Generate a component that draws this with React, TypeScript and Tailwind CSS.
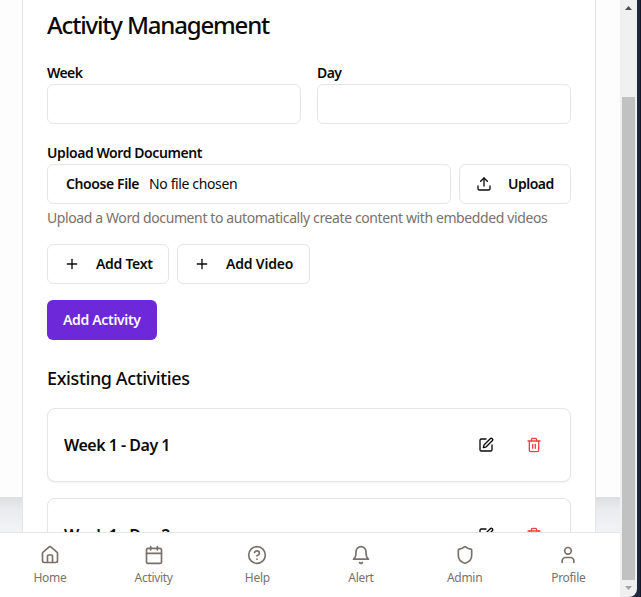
import type { ReactNode } from "react";
import { Calendar, CircleHelp, House, Plus, Shield, SquarePen, Trash2, Upload, User } from "lucide-react";

const field = "h-10 rounded-md border border-[#e5e5e5] bg-white";
const outline = "flex h-10 items-center rounded-md border border-[#e5e5e5] bg-white pl-4 text-sm font-semibold whitespace-nowrap";

function ActivityRow({ title }: { title: string }) {
  return (
    <div className="flex h-[74px] shrink-0 items-center justify-between rounded-lg border border-[#e5e5e5] bg-white pl-4 pr-7 shadow-xs">
      <span className="text-base font-semibold tracking-[-0.5px]">{title}</span>
      <div className="flex items-center gap-8">
        <SquarePen size={16} />
        <Trash2 size={16} className="text-[#ef4444]" />
      </div>
    </div>
  );
}

function NavItem({ icon, label }: { icon: ReactNode; label: string }) {
  return (
    <div className="flex flex-col items-center gap-[5px]">
      {icon}
      <span className="text-xs leading-4 tracking-[-0.3px] whitespace-nowrap">{label}</span>
    </div>
  );
}

function BellIcon() {
  return (
    <svg width="20" height="20" viewBox="0 0 24 24" fill="none" stroke="currentColor" strokeWidth="2" strokeLinecap="round" strokeLinejoin="round">
      <path d="M6 8a6 6 0 0 1 12 0c0 7 3 9 3 9H3s3-2 3-9" />
      <path d="M10.3 21a1.94 1.94 0 0 0 3.4 0" />
    </svg>
  );
}

export default function App() {
  return (
    <div className="flex h-[597px] w-[641px] overflow-hidden bg-[#20283d] font-['Noto_Sans','Segoe_UI',sans-serif] text-stone-950">
      <div className="flex w-[620px] flex-col bg-white">
        <div className="flex h-[532px] overflow-hidden bg-gray-100">
          <div className="flex w-[22px] flex-col">
            <div className="h-[497px] bg-[#fdfdfd]" />
            <div className="h-[35px] bg-linear-to-b from-[#dcdee0] via-[#e9ebee] via-35% to-[#f2f3f5]" />
          </div>
          <main className="flex w-[574px] shrink-0 flex-col border-x border-[#e5e5e5] bg-white px-6">
            <h1 className="mt-[9px] h-8 text-2xl leading-8 font-medium tracking-[-1.17px] whitespace-nowrap">Activity Management</h1>
            <div className="mt-[22px] grid grid-cols-2 gap-4">
              <label className="flex flex-col gap-0.5 text-sm leading-[19px] font-semibold tracking-[-0.6px]">
                Week
                <span className={field} />
              </label>
              <label className="flex flex-col gap-0.5 text-sm leading-[19px] font-semibold tracking-[-0.6px]">
                Day
                <span className={field} />
              </label>
            </div>
            <div className="mt-[19px] mb-px flex h-5 items-center text-sm font-semibold tracking-[-0.42px]">Upload Word Document</div>
            <div className="flex gap-2">
              <div className={field + " flex w-[404px] items-center gap-2.5 pl-[18px] text-sm"}>
                <span className="w-[73px] font-semibold tracking-[-0.4px] whitespace-nowrap">Choose File</span>
                <span className="tracking-[-0.37px]">No file chosen</span>
              </div>
              <div className={outline + " w-[112px] gap-4"}>
                <Upload size={16} />
                <span className="tracking-[-0.5px]">Upload</span>
              </div>
            </div>
            <p className="mt-1 h-5 text-sm leading-5 tracking-[-0.39px] whitespace-nowrap text-stone-500">Upload a Word document to automatically create content with embedded videos</p>
            <div className="mt-4 flex gap-2">
              <div className={outline + " w-[122px] gap-4"}>
                <Plus size={16} />
                <span className="tracking-[-0.3px]">Add Text</span>
              </div>
              <div className={outline + " w-[133px] gap-4"}>
                <Plus size={16} />
                <span className="tracking-[-0.2px]">Add Video</span>
              </div>
            </div>
            <div className="mt-4 flex h-10 w-[110px] shrink-0 items-center rounded-md bg-[#6d28d9] pl-4 text-sm font-semibold tracking-[-0.33px] whitespace-nowrap text-gray-50">Add Activity</div>
            <h2 className="mt-6 h-7 shrink-0 text-lg leading-7 font-medium tracking-[-0.38px] whitespace-nowrap">Existing Activities</h2>
            <div className="mt-4 flex flex-col gap-4">
              <ActivityRow title="Week 1 - Day 1" />
              <ActivityRow title="Week 1 - Day 2" />
            </div>
          </main>
          <div className="flex w-6 flex-col">
            <div className="h-[497px] bg-[#fdfdfd]" />
            <div className="h-[35px] bg-linear-to-b from-[#dcdee0] via-[#e9ebee] via-35% to-[#f2f3f5]" />
          </div>
        </div>
        <nav className="h-[65px] overflow-hidden border-t border-[#e7e5e4] bg-white pt-3 text-stone-500">
          <div className="-ml-[1.85px] grid w-[622px] grid-cols-6">
            <NavItem icon={<House size={20} />} label="Home" />
            <NavItem icon={<Calendar size={20} />} label="Activity" />
            <NavItem icon={<CircleHelp size={20} />} label="Help" />
            <NavItem icon={<BellIcon />} label="Alert" />
            <NavItem icon={<Shield size={20} />} label="Admin" />
            <NavItem icon={<User size={20} />} label="Profile" />
          </div>
        </nav>
      </div>
      <div className="flex w-[17px] flex-col items-center rounded-br-lg bg-[#f0f0f0]">
        <svg width="17" height="17" viewBox="0 0 17 17" className="shrink-0">
          <path d="M5 10h7L8.5 6z" fill="#505050" />
        </svg>
        <div className="mt-20 h-[483px] w-[13px] shrink-0 bg-[#c1c1c1]" />
        <svg width="17" height="17" viewBox="0 0 17 17" className="shrink-0">
          <path d="M5 6h7l-3.5 4z" fill="#a3a3a3" />
        </svg>
      </div>
      <div className="ml-[3px] w-px bg-[#12172a]" />
    </div>
  );
}
